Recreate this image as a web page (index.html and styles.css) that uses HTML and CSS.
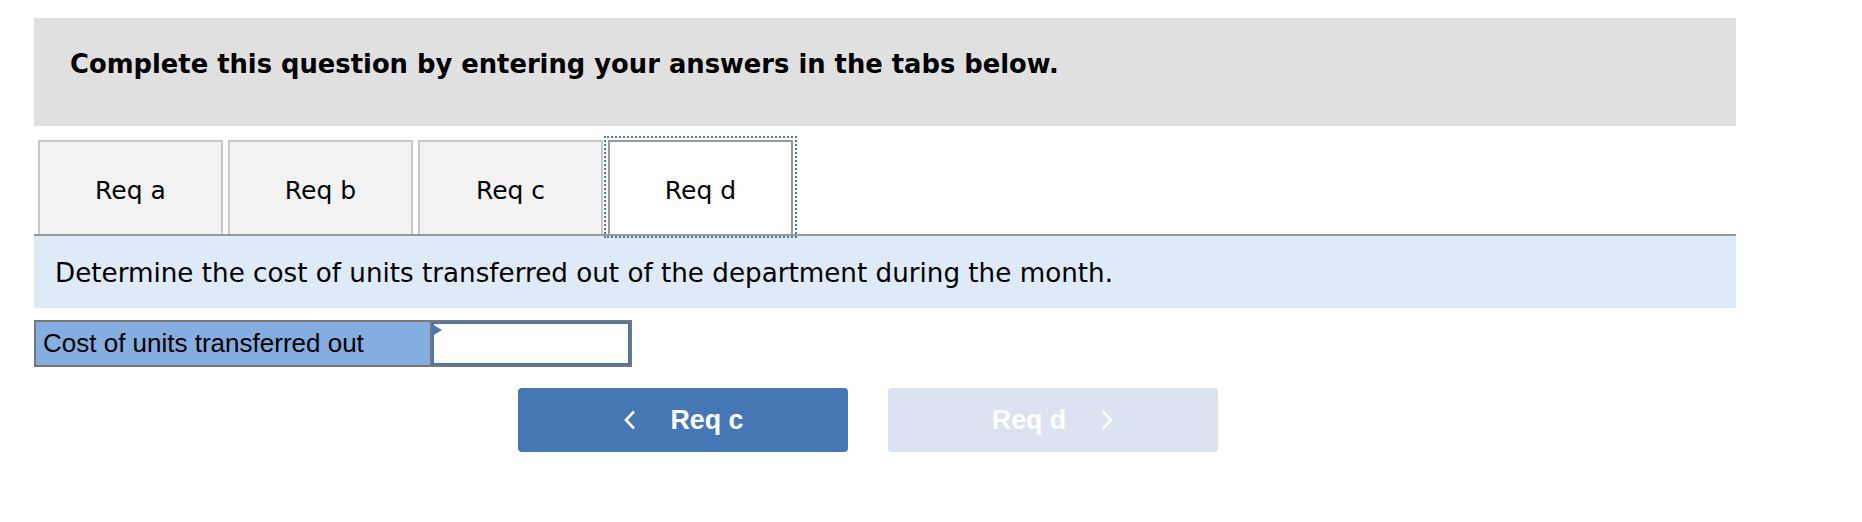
FILE: index.html
```html
<!DOCTYPE html>
<html>
<head>
<meta charset="utf-8">
<link rel="stylesheet" href="styles.css">
</head>
<body>
<div class="page">
  <div class="intro">Complete this question by entering your answers in the tabs below.</div>
  <div class="tabs">
    <div class="tab">Req a</div>
    <div class="tab">Req b</div>
    <div class="tab">Req c</div>
    <div class="tab active">Req d</div>
  </div>
  <div class="prompt">Determine the cost of units transferred out of the department during the month.</div>
  <div class="answer">
    <div class="label">Cost of units transferred out</div>
    <div class="input"><span class="marker"></span></div>
  </div>
  <div class="nav">
    <button class="btn prev"><svg class="chev" width="13" height="20" viewBox="0 0 13 20"><polyline points="11,1.5 3,10 11,18.5" fill="none" stroke="#fff" stroke-width="2.6"/></svg><span>Req c</span></button>
    <button class="btn next"><span>Req d</span><svg class="chev" width="13" height="20" viewBox="0 0 13 20"><polyline points="2,1.5 10,10 2,18.5" fill="none" stroke="#fff" stroke-width="2.6"/></svg></button>
  </div>
</div>
</body>
</html>
```
FILE: styles.css
```css
html, body {
  margin: 0;
  padding: 0;
  background: #fff;
}
.page {
  margin: 18px 0 0 34px;
  width: 1702px;
  font-family: "DejaVu Sans", Verdana, sans-serif;
  color: #000;
}
.intro {
  height: 108px;
  box-sizing: border-box;
  background: #e0e0e0;
  padding: 31px 0 0 36px;
  font-size: 25.8px;
  line-height: 30px;
  font-weight: bold;
}
.tabs {
  display: flex;
  gap: 5px;
  margin-top: 14px;
  padding-left: 4px;
  border-bottom: 2px solid #999;
}
.tab {
  width: 185px;
  height: 94px;
  box-sizing: border-box;
  border: 2px solid #c8c8c8;
  border-bottom: none;
  background: #f2f2f2;
  display: flex;
  align-items: center;
  justify-content: center;
  font-size: 25px;
  padding-top: 4px;
}
.tab.active {
  background: #fff;
  border: 2px solid #999;
  border-bottom: none;
  outline: 2px dotted #4a7ab5;
  outline-offset: 2px;
}
.prompt {
  height: 72px;
  box-sizing: border-box;
  background: #deeaf7;
  padding: 1px 0 0 21px;
  display: flex;
  align-items: center;
  font-size: 26.2px;
}
.answer {
  display: flex;
  margin-top: 12px;
  width: 598px;
  height: 47px;
  box-sizing: border-box;
  border: 2px solid #777;
}
.label {
  width: 396px;
  box-sizing: border-box;
  background: #84ade0;
  border-right: 2px solid #777;
  font-family: "Liberation Sans", Arial, sans-serif;
  font-size: 26px;
  padding-left: 7px;
  display: flex;
  align-items: center;
}
.input {
  flex: 1;
  background: #fff;
  border: 2px solid #4a76b4;
  position: relative;
}
.marker {
  position: absolute;
  left: -2px;
  top: 0;
  width: 0;
  height: 0;
  border-top: 6px solid transparent;
  border-bottom: 6px solid transparent;
  border-left: 10px solid #4a76b4;
}
.nav {
  display: flex;
  gap: 40px;
  margin: 21px 0 0 484px;
}
.btn {
  width: 330px;
  height: 64px;
  border: none;
  border-radius: 4px;
  display: flex;
  align-items: center;
  justify-content: center;
  gap: 35px;
  color: #fff;
  font-family: "Liberation Sans", Arial, sans-serif;
  font-weight: bold;
  font-size: 26.8px;
  padding: 0;
}
.btn.prev {
  background: #4577b4;
}
.btn.next {
  background: #dae3ef;
}
```
